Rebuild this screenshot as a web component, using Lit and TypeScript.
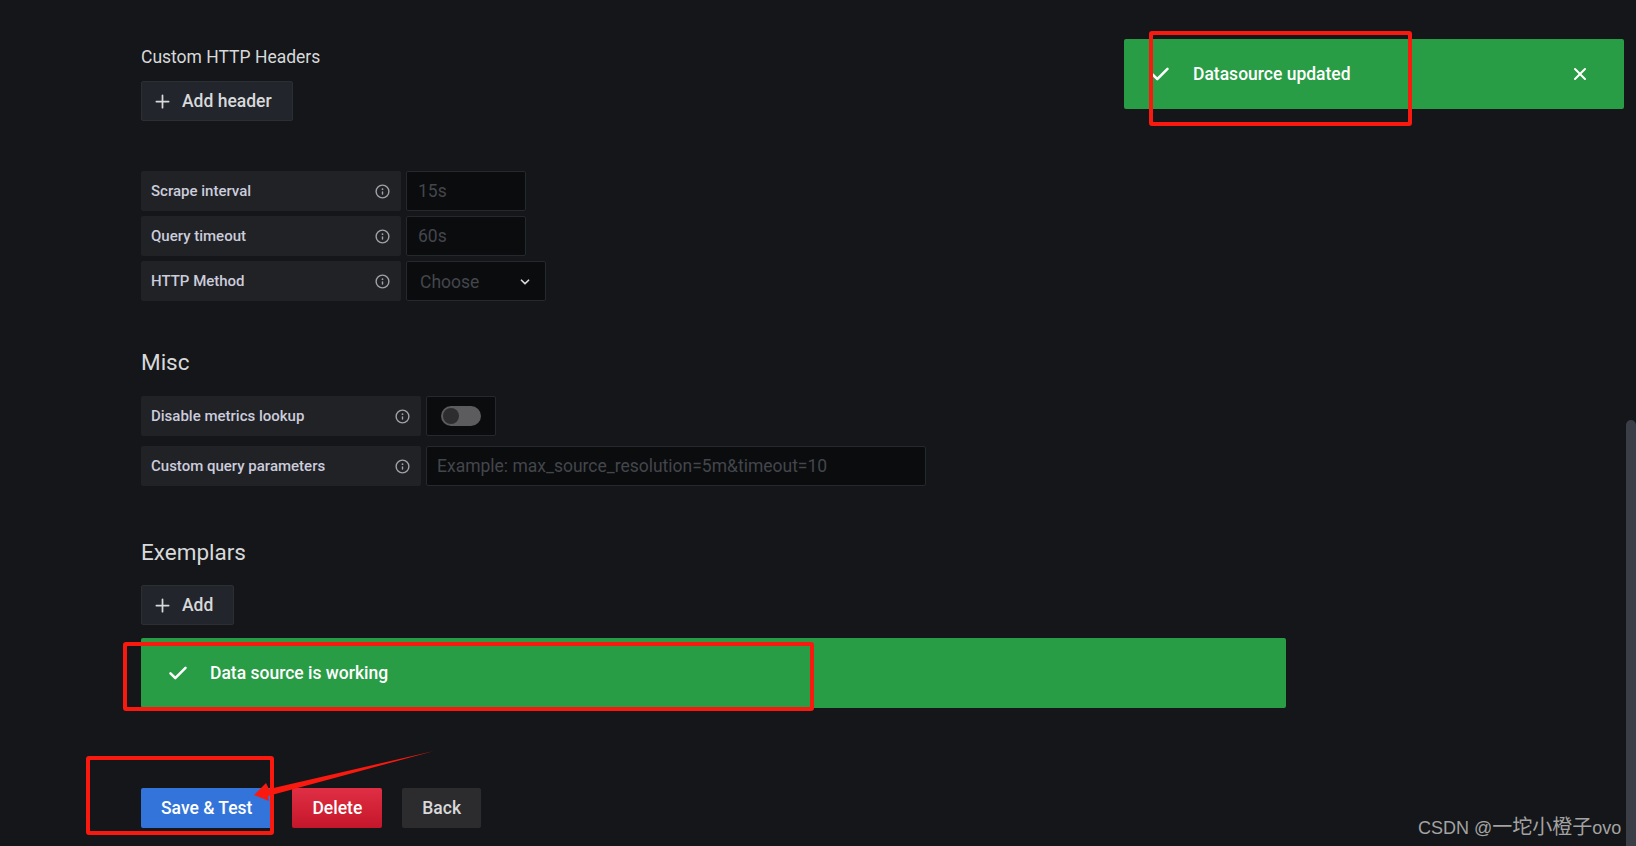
import { LitElement, html, css, svg } from "lit";
import { customElement } from "lit/decorators.js";

const icon = (d: string, size: number, cls = "") =>
  html`<svg class="icon ${cls}" width=${size} height=${size} viewBox="0 0 24 24" fill="currentColor">${svg`<path d=${d}></path>`}</svg>`;

const INFO = "M12,2A10,10,0,1,0,22,12,10,10,0,0,0,12,2Zm0,18a8,8,0,1,1,8-8A8,8,0,0,1,12,20Zm0-8.5a1,1,0,0,0-1,1v3a1,1,0,0,0,2,0v-3A1,1,0,0,0,12,11.5Zm0-4a1.25,1.25,0,1,0,1.25,1.25A1.25,1.25,0,0,0,12,7.5Z";
const PLUS = "M19,11H13V5a1,1,0,0,0-2,0v6H5a1,1,0,0,0,0,2h6v6a1,1,0,0,0,2,0V13h6a1,1,0,0,0,0-2Z";
const CHECK = "M18.71,7.21a1,1,0,0,0-1.42,0L9.84,14.67,6.71,11.53A1,1,0,1,0,5.29,13l3.84,3.84a1,1,0,0,0,1.42,0l8.16-8.16A1,1,0,0,0,18.71,7.21Z";
const TIMES = "M13.41,12l4.3-4.29a1,1,0,1,0-1.42-1.42L12,10.59,7.71,6.29A1,1,0,0,0,6.29,7.71L10.59,12l-4.3,4.29a1,1,0,0,0,0,1.42,1,1,0,0,0,1.42,0L12,13.41l4.29,4.3a1,1,0,0,0,1.42,0,1,1,0,0,0,0-1.42Z";
const ANGLE = "M17,9.17a1,1,0,0,0-1.41,0L12,12.71,8.46,9.17a1,1,0,0,0-1.41,0,1,1,0,0,0,0,1.42l4.24,4.24a1,1,0,0,0,1.42,0L17,10.59A1,1,0,0,0,17,9.17Z";

@customElement("app-root")
export class AppRoot extends LitElement {
  static styles = css`
    :host {
      display: block;
      position: relative;
      width: 1636px;
      height: 846px;
      overflow: hidden;
      background: #141619;
      color: #d8d9da;
      font-family: Roboto, "Liberation Sans", sans-serif;
      font-size: 15px;
    }
    .page {
      display: flex;
      flex-direction: column;
      align-items: flex-start;
      padding: 45px 0 0 141px;
    }
    .icon { display: block; flex: none; }
    .sub { font-size: 17.5px; line-height: 24px; color: #d8d9da; margin-bottom: 12px; }
    .btn {
      display: flex;
      align-items: center;
      height: 40px;
      box-sizing: border-box;
      border-radius: 2px;
      font-size: 17.5px;
      font-weight: 500;
    }
    .secondary {
      background: #22252b;
      border: 1px solid #2b2e33;
      color: #d8d9da;
      padding: 0 20px 0 10px;
      gap: 9px;
    }
    .rows { display: flex; flex-direction: column; gap: 5px; margin-top: 50px; }
    .rows.misc { gap: 10px; margin-top: 0; }
    .row { display: flex; gap: 5px; }
    .label {
      display: flex;
      align-items: center;
      justify-content: space-between;
      box-sizing: border-box;
      width: 260px;
      height: 40px;
      padding: 0 10px;
      background: #202226;
      border-radius: 2px;
      font-weight: 500;
      color: #ccccdc;
    }
    .misc .label { width: 280px; }
    .label .icon { color: #9fa2a8; }
    .input {
      display: flex;
      align-items: center;
      box-sizing: border-box;
      height: 40px;
      background: #0b0c0e;
      border: 1px solid #25282c;
      border-radius: 2px;
      padding: 0 11px;
      font-size: 17.5px;
      color: #43464c;
    }
    .w120 { width: 120px; }
    .select { width: 140px; justify-content: space-between; padding: 1px 10px 0 13px; }
    .select .icon { color: #d8d9da; }
    .wide { width: 500px; padding: 0 10px; }
    .toggle-box { width: 70px; padding: 0 0 0 14px; }
    .toggle {
      display: flex;
      align-items: center;
      width: 40px;
      height: 20px;
      border-radius: 10px;
      background: #5c5c5e;
    }
    .knob { width: 16px; height: 16px; margin-left: 2px; border-radius: 50%; background: #2d2d30; }
    h3 { margin: 0; font-size: 22.5px; font-weight: 400; line-height: 34px; color: #d8d9da; }
    .misc-h { margin: 44px 0 17px; }
    .ex-h { margin: 49px 0 16px; }
    .alert {
      display: flex;
      align-items: center;
      box-sizing: border-box;
      width: 1145px;
      height: 70px;
      margin-top: 13px;
      padding: 0 0 0 22px;
      gap: 17px;
      background: #299c46;
      border-radius: 2px;
      color: #fff;
      font-size: 17.5px;
      font-weight: 500;
    }
    .actions { display: flex; gap: 20px; margin-top: 80px; }
    .primary { background: #3274d9; color: #fff; padding: 0 20px; }
    .danger { background: linear-gradient(#e02f44, #c4162a); color: #fff; padding: 0 20px; }
    .back { background: #2c2c2e; color: #d8d9da; padding: 0 20px; }
    .toast {
      position: absolute;
      left: 1124px;
      top: 39px;
      width: 500px;
      margin-top: 0;
      padding: 0 32px 0 21px;
      gap: 18px;
    }
    .toast .spacer { flex: 1; }
    .scroll {
      position: absolute;
      left: 1626px;
      top: 420px;
      width: 10px;
      height: 426px;
      background: #3b3d47;
      border-radius: 5px 5px 0 0;
    }
    .mark {
      position: absolute;
      box-sizing: border-box;
      border: 4px solid #f9190f;
      border-radius: 3px;
    }
    .m1 { left: 1149px; top: 31px; width: 263px; height: 95px; }
    .m2 { left: 123px; top: 642px; width: 691px; height: 69px; }
    .m3 { left: 86px; top: 756px; width: 188px; height: 79px; }
    .arrow { position: absolute; left: 0; top: 0; pointer-events: none; }
    .wm {
      position: absolute;
      left: 1418px;
      top: 815px;
      font-family: "Liberation Sans", "Noto Sans CJK SC", sans-serif;
      font-size: 18px;
      line-height: 24px;
      color: #a3a3a3;
      white-space: nowrap;
    }
    .wm span { font-size: 20px; }
  `;

  private field(name: string, ctl: unknown) {
    return html`<div class="row"><div class="label"><span>${name}</span>${icon(INFO, 17)}</div>${ctl}</div>`;
  }

  render() {
    return html`
      <div class="page">
        <div class="sub">Custom HTTP Headers</div>
        <div class="btn secondary">${icon(PLUS, 21)}<span>Add header</span></div>
        <div class="rows">
          ${this.field("Scrape interval", html`<div class="input w120">15s</div>`)}
          ${this.field("Query timeout", html`<div class="input w120">60s</div>`)}
          ${this.field("HTTP Method", html`<div class="input select"><span>Choose</span>${icon(ANGLE, 20)}</div>`)}
        </div>
        <h3 class="misc-h">Misc</h3>
        <div class="rows misc">
          ${this.field("Disable metrics lookup", html`<div class="input toggle-box"><div class="toggle"><div class="knob"></div></div></div>`)}
          ${this.field("Custom query parameters", html`<div class="input wide">Example: max_source_resolution=5m&amp;timeout=10</div>`)}
        </div>
        <h3 class="ex-h">Exemplars</h3>
        <div class="btn secondary">${icon(PLUS, 21)}<span>Add</span></div>
        <div class="alert">${icon(CHECK, 30)}<span>Data source is working</span></div>
        <div class="actions">
          <div class="btn primary">Save &amp; Test</div>
          <div class="btn danger">Delete</div>
          <div class="btn back">Back</div>
        </div>
      </div>
      <div class="alert toast">${icon(CHECK, 30)}<span>Datasource updated</span><span class="spacer"></span>${icon(TIMES, 24)}</div>
      <div class="scroll"></div>
      <div class="mark m1"></div>
      <div class="mark m2"></div>
      <div class="mark m3"></div>
      <svg class="arrow" width="1636" height="846"><polygon fill="#f9190f" points="434,751 269,789 266,783 254,795 269,801 268,796"></polygon></svg>
      <div class="wm">CSDN @<span>一坨小橙子</span>ovo</div>
    `;
  }
}
